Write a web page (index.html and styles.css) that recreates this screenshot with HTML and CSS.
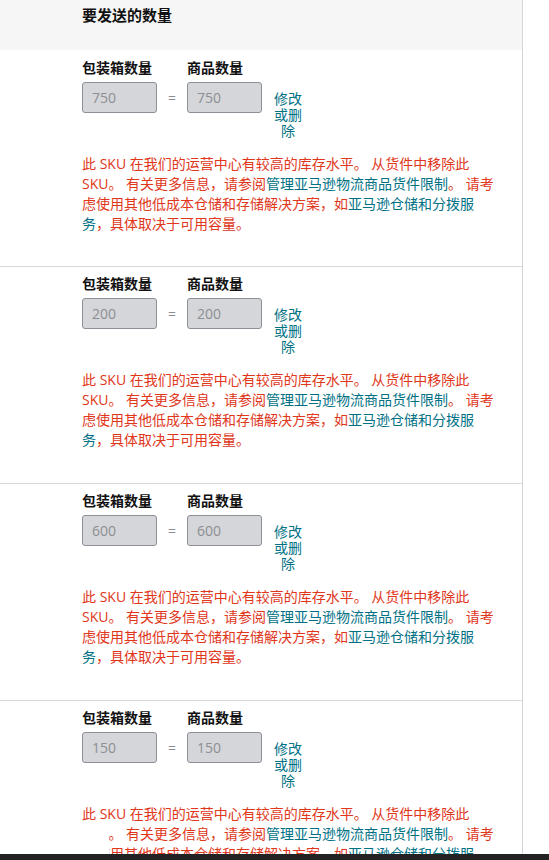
FILE: index.html
```html
<!DOCTYPE html>
<html lang="zh-CN">
<head>
  <meta charset="UTF-8" />
  <meta name="viewport" content="width=device-width, initial-scale=1.0" />
  <title>要发送的数量</title>
  <link rel="stylesheet" href="styles.css">
</head>
<body>
  <div class="page">
    <div class="page-head">
      <h2>要发送的数量</h2>
    </div>

    <section class="sku-box">
      <div class="qty-grid">
        <label class="qty-label">包装箱数量</label>
        <span></span>
        <label class="qty-label">商品数量</label>
        <span></span>
        <input class="qty-input" type="text" value="750" disabled>
        <span class="qty-eq">=</span>
        <input class="qty-input" type="text" value="750" disabled>
        <a href="#" class="qty-edit">修改或删除</a>
      </div>
      <p class="sku-warning">此 SKU 在我们的运营中心有较高的库存水平。 从货件中移除此 SKU。 有关更多信息，请参阅<a href="#">管理亚马逊物流商品货件限制</a>。 请考虑使用其他低成本仓储和存储解决方案，如<a href="#">亚马逊仓储和分拨服务</a>，具体取决于可用容量。</p>
    </section>

    <section class="sku-box">
      <div class="qty-grid">
        <label class="qty-label">包装箱数量</label>
        <span></span>
        <label class="qty-label">商品数量</label>
        <span></span>
        <input class="qty-input" type="text" value="200" disabled>
        <span class="qty-eq">=</span>
        <input class="qty-input" type="text" value="200" disabled>
        <a href="#" class="qty-edit">修改或删除</a>
      </div>
      <p class="sku-warning">此 SKU 在我们的运营中心有较高的库存水平。 从货件中移除此 SKU。 有关更多信息，请参阅<a href="#">管理亚马逊物流商品货件限制</a>。 请考虑使用其他低成本仓储和存储解决方案，如<a href="#">亚马逊仓储和分拨服务</a>，具体取决于可用容量。</p>
    </section>

    <section class="sku-box">
      <div class="qty-grid">
        <label class="qty-label">包装箱数量</label>
        <span></span>
        <label class="qty-label">商品数量</label>
        <span></span>
        <input class="qty-input" type="text" value="600" disabled>
        <span class="qty-eq">=</span>
        <input class="qty-input" type="text" value="600" disabled>
        <a href="#" class="qty-edit">修改或删除</a>
      </div>
      <p class="sku-warning">此 SKU 在我们的运营中心有较高的库存水平。 从货件中移除此 SKU。 有关更多信息，请参阅<a href="#">管理亚马逊物流商品货件限制</a>。 请考虑使用其他低成本仓储和存储解决方案，如<a href="#">亚马逊仓储和分拨服务</a>，具体取决于可用容量。</p>
    </section>

    <section class="sku-box">
      <div class="qty-grid">
        <label class="qty-label">包装箱数量</label>
        <span></span>
        <label class="qty-label">商品数量</label>
        <span></span>
        <input class="qty-input" type="text" value="150" disabled>
        <span class="qty-eq">=</span>
        <input class="qty-input" type="text" value="150" disabled>
        <a href="#" class="qty-edit">修改或删除</a>
      </div>
      <p class="sku-warning">此 SKU 在我们的运营中心有较高的库存水平。 从货件中移除此 SKU。 有关更多信息，请参阅<a href="#">管理亚马逊物流商品货件限制</a>。 请考虑使用其他低成本仓储和存储解决方案，如<a href="#">亚马逊仓储和分拨服务</a>，具体取决于可用容量。<span class="sku-mask"></span></p>
    </section>
  </div>

  <div class="bottom-bar"></div>
</body>
</html>
```

FILE: styles.css
```css
* { margin: 0; padding: 0; box-sizing: border-box; }
body {
  font-family: 'Open Sans', 'Noto Sans CJK SC', sans-serif;
  font-size: 14px;
  color: #111;
  background: #fff;
  overflow: hidden;
}

.page {
  width: 523px;
  min-height: 100vh;
  border-right: 1px solid #d5d5d5;
}

.page-head {
  height: 50px;
  background-color: #f6f6f6;
  padding: 5px 0 0 82px;
}

.page-head h2 {
  font-size: 15px;
  font-weight: 700;
  line-height: 20px;
}

.sku-box {
  border-bottom: 1px solid #d5d9d9;
  padding: 8px 27px 33px 82px;
}

.sku-box:first-of-type {
  padding-top: 9px;
  padding-bottom: 32px;
}

.qty-grid {
  display: grid;
  grid-template-columns: 75px 30px 75px auto;
  grid-template-rows: 18px 57px;
  row-gap: 5px;
  align-items: start;
}

.qty-label {
  font-size: 14px;
  font-weight: 700;
  line-height: 18px;
  white-space: nowrap;
}

.qty-input {
  width: 75px;
  height: 31px;
  padding: 0 0 0 9px;
  border: 1px solid #8d9096;
  border-radius: 3px;
  background-color: #d5d6d9;
  font-family: inherit;
  font-size: 14px;
  color: #8b8f94;
  -webkit-text-fill-color: #8b8f94;
  opacity: 1;
}

.qty-eq {
  line-height: 31px;
  text-align: center;
  color: #8b8f94;
}

.qty-edit {
  display: block;
  width: 30px;
  margin: 9px 0 0 11px;
  line-height: 16px;
  text-align: center;
  color: #007185;
  text-decoration: none;
}

.sku-warning {
  position: relative;
  margin-top: 15px;
  line-height: 20px;
  color: #e0361a;
}

.sku-warning a {
  color: #007185;
  text-decoration: none;
}

.sku-mask {
  position: absolute;
  top: 20px;
  left: 0;
  width: 27px;
  height: 40px;
  background: #fff;
}

.bottom-bar {
  position: fixed;
  left: 0;
  bottom: 0;
  width: 100%;
  height: 6px;
  background-color: #232323;
}
```
